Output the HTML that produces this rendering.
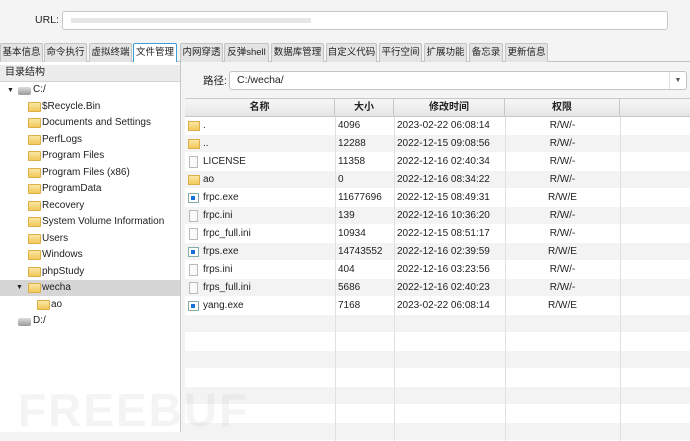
<!DOCTYPE html><html><head><meta charset="utf-8"><style>
*{margin:0;padding:0;box-sizing:border-box}
body{width:690px;height:432px;overflow:hidden;background:#f4f4f4;font-family:"Liberation Sans","Noto Sans CJK SC",sans-serif;font-size:10px;color:#222;position:relative}
.a{position:absolute}
.tab{position:absolute;top:43px;height:19px;background:#e4e4e4;border:1px solid #c4c4c4;border-bottom:none;border-radius:2px 2px 0 0;text-align:center;line-height:17px;font-size:9.5px;white-space:nowrap;overflow:hidden}
.tab.s{background:#fff;border:1px solid #39a0d8;border-bottom:none}
.fold{position:absolute;width:13px;height:10px;background:linear-gradient(#fbe7a3,#f3c95a);border:1px solid #dcae45;border-radius:1px}
.tr{position:absolute;left:0;height:16px;line-height:16px;white-space:nowrap;font-size:10px}
.row{position:absolute;left:185px;width:505px;height:18px;line-height:18px;border-bottom:1px solid #fff;font-size:10px}
.row span{position:absolute}
.c{border-right:1px solid #e0e0e0;height:18px;top:0}
</style></head><body>
<div class="a" style="left:35px;top:14px;font-size:10.5px">URL:</div>
<div class="a" style="left:62px;top:11px;width:606px;height:19px;background:#fff;border:1px solid #c8c8c8;border-radius:3px"><div style="margin:6px 0 0 8px;width:240px;height:5px;background:#ddd;opacity:.7"></div></div>
<div class="a" style="left:0;top:61px;width:690px;height:1px;background:#c4c4c4"></div>
<div class="tab" style="left:0;width:43px">基本信息</div>
<div class="tab" style="left:44px;width:43px">命令执行</div>
<div class="tab" style="left:89px;width:43px">虚拟终端</div>
<div class="tab s" style="left:133px;width:44px;height:20px">文件管理</div>
<div class="tab" style="left:180px;width:43px">内网穿透</div>
<div class="tab" style="left:224px;width:45px">反弹shell</div>
<div class="tab" style="left:271px;width:53px">数据库管理</div>
<div class="tab" style="left:326px;width:51px">自定义代码</div>
<div class="tab" style="left:379px;width:43px">平行空间</div>
<div class="tab" style="left:424px;width:43px">扩展功能</div>
<div class="tab" style="left:469px;width:34px">备忘录</div>
<div class="tab" style="left:505px;width:43px">更新信息</div>
<!-- left panel -->
<div class="a" style="left:0;top:62px;width:181px;height:370px;background:#fff;border-right:1px solid #c8c8c8"></div>
<div class="a" style="left:0;top:65px;width:180px;height:17px;background:#ececec;border-bottom:1px solid #d4d4d4;line-height:16px;padding-left:5px">目录结构</div>
<div class="a" style="left:0;top:280px;width:180px;height:16px;background:#d6d6d6"></div>
<div class="a" style="left:7px;top:87px;font-size:7px">▼</div>
<div class="a" style="left:18px;top:87px;width:13px;height:8px;background:linear-gradient(#ddd,#999);border-radius:2px"></div>
<div class="tr" style="left:33px;top:82px">C:/</div>
<div class="fold" style="left:28px;top:102px"></div><div class="tr" style="left:42px;top:99px">$Recycle.Bin</div>
<div class="fold" style="left:28px;top:118px"></div><div class="tr" style="left:42px;top:115px">Documents and Settings</div>
<div class="fold" style="left:28px;top:135px"></div><div class="tr" style="left:42px;top:132px">PerfLogs</div>
<div class="fold" style="left:28px;top:151px"></div><div class="tr" style="left:42px;top:148px">Program Files</div>
<div class="fold" style="left:28px;top:168px"></div><div class="tr" style="left:42px;top:165px">Program Files (x86)</div>
<div class="fold" style="left:28px;top:184px"></div><div class="tr" style="left:42px;top:181px">ProgramData</div>
<div class="fold" style="left:28px;top:201px"></div><div class="tr" style="left:42px;top:198px">Recovery</div>
<div class="fold" style="left:28px;top:217px"></div><div class="tr" style="left:42px;top:214px">System Volume Information</div>
<div class="fold" style="left:28px;top:234px"></div><div class="tr" style="left:42px;top:231px">Users</div>
<div class="fold" style="left:28px;top:250px"></div><div class="tr" style="left:42px;top:247px">Windows</div>
<div class="fold" style="left:28px;top:267px"></div><div class="tr" style="left:42px;top:264px">phpStudy</div>
<div class="a" style="left:16px;top:284px;font-size:7px">▼</div>
<div class="fold" style="left:28px;top:283px"></div><div class="tr" style="left:42px;top:280px">wecha</div>
<div class="fold" style="left:37px;top:300px"></div><div class="tr" style="left:51px;top:297px">ao</div>
<div class="a" style="left:18px;top:318px;width:13px;height:8px;background:linear-gradient(#ddd,#999);border-radius:2px"></div>
<div class="tr" style="left:33px;top:313px">D:/</div>
<!-- right -->
<div class="a" style="left:203px;top:73px;font-size:10.5px">路径:</div>
<div class="a" style="left:229px;top:71px;width:458px;height:19px;background:#fff;border:1px solid #c4c4c4;border-radius:3px;line-height:17px;padding-left:7px;font-size:10.5px">C:/wecha/</div>
<div class="a" style="left:669px;top:72px;width:17px;height:17px;border-left:1px solid #ddd;text-align:center;font-size:7px;line-height:17px;color:#555">▼</div>
<div class="a" style="left:185px;top:98px;width:505px;height:334px;background:#fff;border:1px solid #c8c8c8"></div>
<div class="a" style="left:185px;top:99px;width:505px;height:18px;background:linear-gradient(#f6f6f6,#e6e6e6);border-bottom:1px solid #c8c8c8;font-weight:bold;line-height:17px">
<span class="a" style="left:0;width:150px;text-align:center;border-right:1px solid #c8c8c8;height:17px">名称</span>
<span class="a" style="left:150px;width:59px;text-align:center;border-right:1px solid #c8c8c8;height:17px">大小</span>
<span class="a" style="left:209px;width:111px;text-align:center;border-right:1px solid #c8c8c8;height:17px">修改时间</span>
<span class="a" style="left:320px;width:115px;text-align:center;border-right:1px solid #c8c8c8;height:17px">权限</span>
</div>
<div id="rows"></div>
<script>
var d=[["f",".","4096","2023-02-22 06:08:14","R/W/-"],["f","..","12288","2022-12-15 09:08:56","R/W/-"],["d","LICENSE","11358","2022-12-16 02:40:34","R/W/-"],["f","ao","0","2022-12-16 08:34:22","R/W/-"],["e","frpc.exe","11677696","2022-12-15 08:49:31","R/W/E"],["i","frpc.ini","139","2022-12-16 10:36:20","R/W/-"],["i","frpc_full.ini","10934","2022-12-15 08:51:17","R/W/-"],["e","frps.exe","14743552","2022-12-16 02:39:59","R/W/E"],["i","frps.ini","404","2022-12-16 03:23:56","R/W/-"],["i","frps_full.ini","5686","2022-12-16 02:40:23","R/W/-"],["e","yang.exe","7168","2023-02-22 06:08:14","R/W/E"]];
var h="";for(var i=0;i<18;i++){var t=117+18*i,r=d[i],bg=i%2?"#f3f3f3":"#fff";h+='<div class="row" style="top:'+t+'px;background:'+bg+'">';
h+='<span class="c" style="left:150px"></span><span class="c" style="left:209px"></span><span class="c" style="left:320px"></span><span class="c" style="left:435px"></span>';
if(r){var ic=r[0]=="f"?'<span style="left:3px;top:4px;width:12px;height:10px;background:linear-gradient(#fbe7a3,#f3c95a);border:1px solid #dcae45"></span>':r[0]=="e"?'<span style="left:3px;top:4px;width:11px;height:10px;border:1px solid #8aa;background:#fff"><i style="position:absolute;left:2px;top:2px;width:4px;height:4px;background:#1a6fd8"></i></span>':'<span style="left:4px;top:3px;width:9px;height:12px;border:1px solid #bbb;background:#fafafa"></span>';
h+=ic+'<span style="left:18px">'+r[1]+'</span><span style="left:153px">'+r[2]+'</span><span style="left:212px">'+r[3]+'</span><span style="left:320px;width:115px;text-align:center">'+r[4]+'</span>';}
h+='</div>';}
document.getElementById("rows").innerHTML=h;
</script>
<div class="a" style="left:18px;top:383px;font-size:46px;font-weight:bold;color:rgba(200,200,200,.2);letter-spacing:2px">FREEBUF</div>
</body></html>
